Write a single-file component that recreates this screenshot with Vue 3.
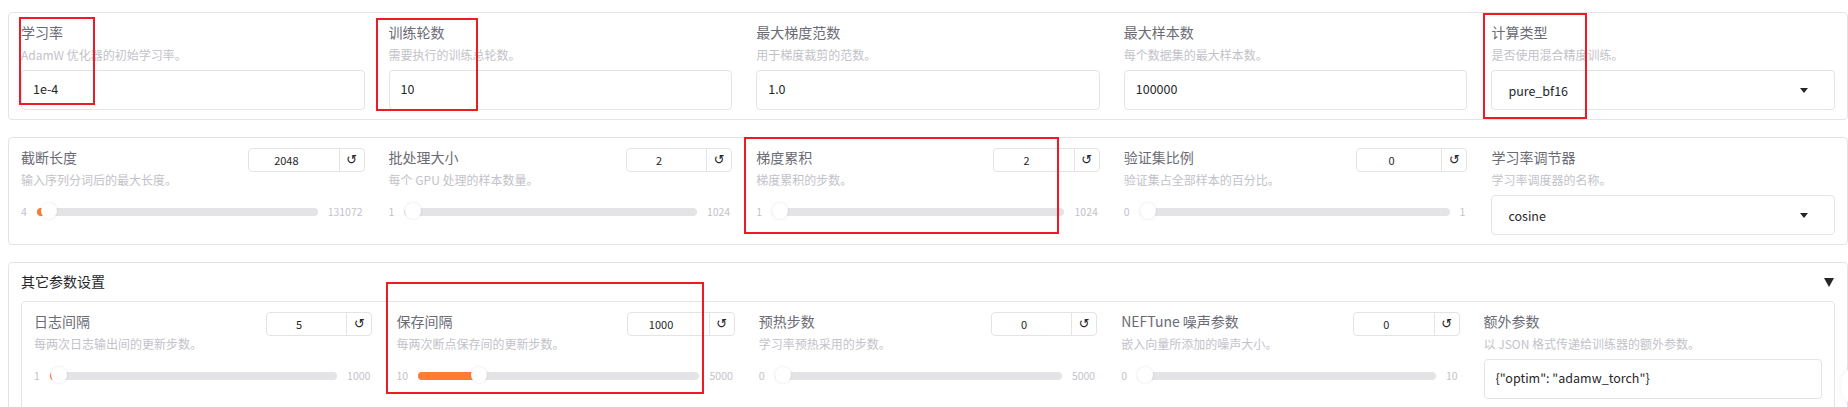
<script setup>
const basicFields = [
  { label: '学习率', info: 'AdamW 优化器的初始学习率。', value: '1e-4' },
  { label: '训练轮数', info: '需要执行的训练总轮数。', value: '10' },
  { label: '最大梯度范数', info: '用于梯度裁剪的范数。', value: '1.0' },
  { label: '最大样本数', info: '每个数据集的最大样本数。', value: '100000' },
  { label: '计算类型', info: '是否使用混合精度训练。', value: 'pure_bf16', select: true }
]

const sliderFields = [
  { label: '截断长度', info: '输入序列分词后的最大长度。', value: 2048, min: 4, max: 131072, boxWidth: 89.5 },
  { label: '批处理大小', info: '每个 GPU 处理的样本数量。', value: 2, min: 1, max: 1024, boxWidth: 79.5 },
  { label: '梯度累积', info: '梯度累积的步数。', value: 2, min: 1, max: 1024, boxWidth: 79.5 },
  { label: '验证集比例', info: '验证集占全部样本的百分比。', value: 0, min: 0, max: 1, boxWidth: 84.5 },
  { label: '学习率调节器', info: '学习率调度器的名称。', value: 'cosine', select: true }
]

const otherFields = [
  { label: '日志间隔', info: '每两次日志输出间的更新步数。', value: 5, min: 1, max: 1000, boxWidth: 79.5 },
  { label: '保存间隔', info: '每两次断点保存间的更新步数。', value: 1000, min: 10, max: 5000, boxWidth: 80.5 },
  { label: '预热步数', info: '学习率预热采用的步数。', value: 0, min: 0, max: 5000, boxWidth: 79.5 },
  { label: 'NEFTune 噪声参数', info: '嵌入向量所添加的噪声大小。', value: 0, min: 0, max: 10, boxWidth: 79.5 },
  { label: '额外参数', info: '以 JSON 格式传递给训练器的额外参数。', value: '{"optim": "adamw_torch"}', text: true }
]

const sections = { basicFields, sliderFields }

const ratio = (f) => (f.value - f.min) / (f.max - f.min)

// thumb is 16px wide, so its center travels between 8px and width - 8px
const thumbLeft = (f) => `calc(${ratio(f)} * (100% - 16px))`
const fillWidth = (f) => `calc(${ratio(f)} * (100% - 16px) + 8px)`
</script>

<template>
  <div class="page">
    <section class="panel grid" v-for="(fields, name) in sections" :key="name">
      <div class="field" v-for="f in fields" :key="f.label">
        <div class="head">
          <span class="label">{{ f.label }}</span>
          <div class="number-box" v-if="f.max !== undefined">
            <input type="number" :value="f.value" :style="{ width: f.boxWidth + 'px' }" />
            <button class="reset">↺</button>
          </div>
        </div>
        <p class="info">{{ f.info }}</p>
        <div class="slider" v-if="f.max !== undefined">
          <span class="limit">{{ f.min }}</span>
          <div class="track">
            <div class="fill" v-if="ratio(f) > 0.002" :style="{ width: fillWidth(f) }"></div>
            <div class="thumb" :style="{ left: thumbLeft(f) }"></div>
          </div>
          <span class="limit">{{ f.max }}</span>
        </div>
        <div class="select" v-else-if="f.select">
          <span>{{ f.value }}</span>
          <i class="caret"></i>
        </div>
        <input class="textbox" v-else type="text" :value="f.value" />
      </div>
    </section>

    <section class="panel accordion">
      <div class="accordion-head">
        <span>其它参数设置</span>
        <svg width="10" height="9" viewBox="0 0 10 9"><polygon points="0,0 10,0 5,9" fill="#27272a" /></svg>
      </div>
      <div class="panel grid inner">
        <div class="field" v-for="f in otherFields" :key="f.label">
          <div class="head">
            <span class="label">{{ f.label }}</span>
            <div class="number-box" v-if="f.max !== undefined">
              <input type="number" :value="f.value" :style="{ width: f.boxWidth + 'px' }" />
              <button class="reset">↺</button>
            </div>
          </div>
          <p class="info">{{ f.info }}</p>
          <div class="slider" v-if="f.max !== undefined">
            <span class="limit">{{ f.min }}</span>
            <div class="track">
              <div class="fill" v-if="ratio(f) > 0.002" :style="{ width: fillWidth(f) }"></div>
              <div class="thumb" :style="{ left: thumbLeft(f) }"></div>
            </div>
            <span class="limit">{{ f.max }}</span>
          </div>
          <input class="textbox" v-else type="text" :value="f.value" />
        </div>
      </div>
    </section>

    <!-- red annotation boxes drawn on top of the form -->
    <div class="mark mark-lr"></div>
    <div class="mark mark-epochs"></div>
    <div class="mark mark-type"></div>
    <div class="mark mark-grad"></div>
    <div class="mark mark-save"></div>
    <div class="floating"></div>
  </div>
</template>

<style scoped>
.page {
  position: relative;
  height: 407px;
  box-sizing: border-box;
  padding: 12px 0 0 8px;
  overflow: hidden;
  background: #fff;
  font-family: "Noto Sans CJK SC", sans-serif;
}

.panel {
  box-sizing: border-box;
  border: 1px solid #e4e4e7;
  border-radius: 4px;
  background: #fff;
  padding: 10px 12px 9px;
  margin-bottom: 17px;
}

.grid {
  display: grid;
  grid-template-columns: repeat(5, minmax(0, 1fr));
  column-gap: 24px;
}

.accordion {
  padding-top: 9px;
  margin-bottom: 0;
  height: 200px;
}

.accordion-head {
  display: flex;
  justify-content: space-between;
  align-items: center;
  height: 18px;
  padding-right: 1px;
  margin-bottom: 11px;
  font-size: 14px;
  color: #27272a;
}

.accordion-head svg {
  margin-top: 2px;
}

.inner {
  margin-bottom: 0;
  height: 160px;
}

.head {
  display: flex;
  justify-content: space-between;
  align-items: flex-start;
  height: 20px;
}

.label {
  font-size: 14px;
  line-height: 18px;
  color: #6b6b75;
}

.info {
  margin: 3px 0 6px;
  font-size: 12px;
  line-height: 18px;
  color: #c2c2ca;
}

.number-box {
  display: flex;
  height: 24px;
  box-sizing: border-box;
  border: 1px solid #e4e4e7;
  border-radius: 4px;
  flex-shrink: 0;
}

.number-box input {
  box-sizing: border-box;
  border: none;
  outline: none;
  padding: 0;
  height: 22px;
  text-align: center;
  font-family: inherit;
  font-size: 11px;
  color: #27272a;
  background: transparent;
}

.reset {
  width: 25px;
  padding: 0;
  border: none;
  border-left: 1px solid #e4e4e7;
  background: transparent;
  font-family: "DejaVu Sans", sans-serif;
  font-size: 13px;
  line-height: 20px;
  color: #27272a;
}

.slider {
  display: flex;
  align-items: center;
  gap: 10px;
  height: 16px;
  margin-top: 15px;
  padding-right: 2px;
}

.limit {
  font-size: 10.5px;
  line-height: 16px;
  color: #c2c2ca;
}

.track {
  position: relative;
  flex: 1;
  height: 8px;
  border-radius: 4px;
  background: #e4e4e7;
}

.fill {
  height: 100%;
  border-radius: 4px;
  background: #ff7c30;
}

.thumb {
  position: absolute;
  top: -5px;
  width: 16px;
  height: 16px;
  border-radius: 50%;
  background: #fff;
  box-shadow: 0 0 3px rgba(0, 0, 0, 0.12);
}

.textbox,
.select {
  display: flex;
  align-items: center;
  justify-content: space-between;
  box-sizing: border-box;
  width: 100%;
  height: 40px;
  border: 1px solid #e4e4e7;
  border-radius: 4px;
  outline: none;
  padding: 0 11px 3px;
  background: #fff;
  font-family: inherit;
  font-size: 12.5px;
  color: #27272a;
}

.select {
  padding: 0 26px 0 16px;
}

.caret {
  width: 0;
  height: 0;
  border-left: 4.5px solid transparent;
  border-right: 4.5px solid transparent;
  border-top: 5px solid #27272a;
}

.mark {
  position: absolute;
  box-sizing: border-box;
  border: 2px solid #ed1c24;
}

.mark-lr {
  left: 19px;
  top: 17px;
  width: 76px;
  height: 88px;
}

.mark-epochs {
  left: 376px;
  top: 18px;
  width: 102px;
  height: 93px;
}

.mark-type {
  left: 1483px;
  top: 13px;
  width: 104px;
  height: 106px;
}

.mark-grad {
  left: 744px;
  top: 137px;
  width: 315px;
  height: 97px;
}

.mark-save {
  left: 386px;
  top: 282px;
  width: 318px;
  height: 112px;
}

.floating {
  position: absolute;
  left: 1841px;
  top: 364px;
  width: 44px;
  height: 44px;
  border-radius: 50%;
  background: #fff;
  box-shadow: 0 0 8px rgba(0, 0, 0, 0.06);
}
</style>

<style>
html,
body {
  margin: 0;
  overflow: hidden;
}
</style>
